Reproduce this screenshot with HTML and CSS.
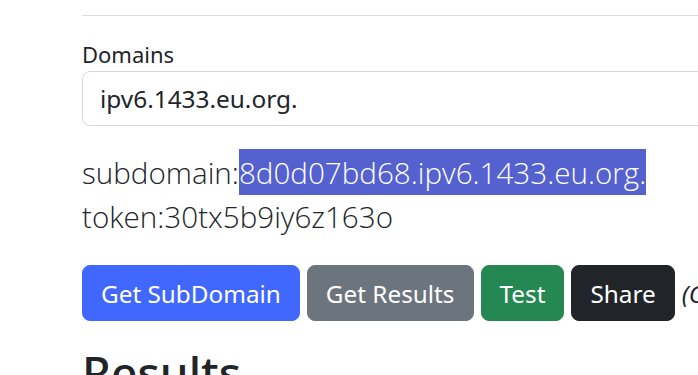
FILE: index.html
```html
<!DOCTYPE html>
<html lang="en">
<head>
<meta charset="utf-8">
<title>Subdomain</title>
<link rel="stylesheet" href="styles.css">
</head>
<body>
<div class="page">
  <hr class="rule">
  <div class="field">
    <label class="field-label" for="domain">Domains</label>
    <input class="field-input" id="domain" type="text" value="ipv6.1433.eu.org.">
  </div>
  <p class="lead">subdomain:<span class="sel">8d0d07bd68.ipv6.1433.eu.org.</span><br>token:30tx5b9iy6z163o</p>
  <div class="actions">
    <button class="btn btn-primary">Get SubDomain</button>
    <button class="btn btn-secondary">Get Results</button>
    <button class="btn btn-success">Test</button>
    <button class="btn btn-dark">Share</button>
    <span class="hint">(Click Share to copy the link)</span>
  </div>
  <h2 class="results-title">Results</h2>
</div>
</body>
</html>
```
FILE: styles.css
```css
html, body {
  margin: 0;
  padding: 0;
  background: #fff;
  overflow: hidden;
}
body {
  font-family: "Segoe UI", "Noto Sans", "Open Sans", sans-serif;
  color: #212529;
}
.page {
  width: 900px;
  padding-left: 82px;
  box-sizing: border-box;
}
.rule {
  margin: 15px 0 0;
  border: 0;
  border-top: 1px solid #dedede;
  height: 0;
}
.field-label {
  display: block;
  margin-top: 21px;
  font-size: 22px;
  line-height: 34px;
}
.field-input {
  display: block;
  width: 100%;
  box-sizing: border-box;
  height: 55px;
  padding: 0 17px;
  border: 1px solid #d3d7db;
  border-radius: 8px;
  font-family: inherit;
  font-size: 24.4px;
  color: #212529;
  background: #fff;
}
.lead {
  margin: 24.5px 0 25.5px;
  font-size: 29.6px;
  line-height: 44.6px;
  font-weight: 300;
  font-family: "Open Sans", "Noto Sans", sans-serif;
}
.sel {
  background: #5561cf;
  color: #fff;
  padding: 3px 0 2px;
}
.actions {
  display: flex;
  align-items: center;
  gap: 7px;
  white-space: nowrap;
}
.btn {
  height: 56px;
  padding: 0 18px;
  border: 1px solid transparent;
  border-radius: 8px;
  font-family: inherit;
  font-size: 24.3px;
  color: #fff;
  flex: none;
}
.btn-primary { background: #4068fe; border-color: #4068fe; }
.btn-secondary { background: #6c757d; border-color: #6c757d; }
.btn-success { background: #258852; border-color: #258852; }
.btn-dark { background: #212529; border-color: #212529; }
.hint {
  font-style: italic;
  font-size: 24px;
  color: #212529;
}
.results-title {
  margin: 24px 0 0;
  font-size: 46px;
  font-weight: 500;
  line-height: 1.2;
}
```
